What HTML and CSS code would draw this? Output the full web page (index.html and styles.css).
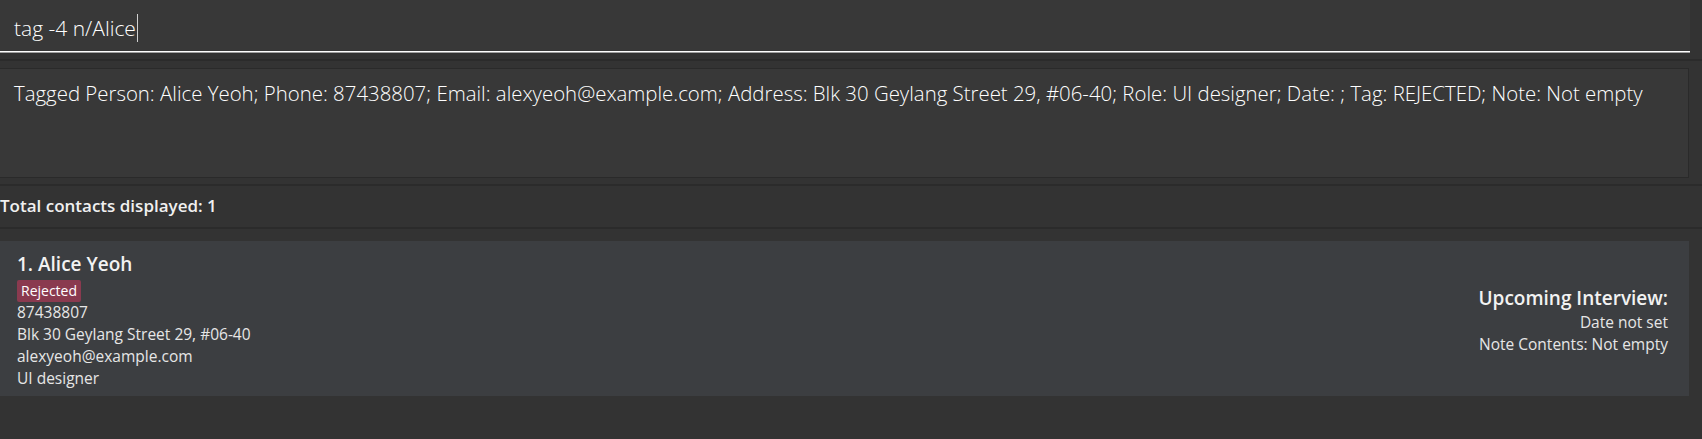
FILE: index.html
```html
<!DOCTYPE html>
<html>
<head>
<meta charset="utf-8">
<link rel="stylesheet" href="styles.css">
</head>
<body>
<div class="app">
  <div class="command-bar">
    <div class="command-field"><span class="command-text">tag -4 n/Alice</span><span class="caret"></span></div>
  </div>
  <div class="divider"></div>
  <div class="result-pane">
    <div class="result-box">Tagged Person: Alice Yeoh; Phone: 87438807; Email: alexyeoh@example.com; Address: Blk 30 Geylang Street 29, #06-40; Role: UI designer; Date: ; Tag: REJECTED; Note: Not empty</div>
  </div>
  <div class="divider"></div>
  <div class="status">Total contacts displayed: 1</div>
  <div class="divider"></div>
  <div class="list">
    <div class="card">
      <div class="card-left">
        <div class="name">1. Alice Yeoh</div>
        <div class="tags"><span class="tag">Rejected</span></div>
        <div class="field">87438807</div>
        <div class="field">Blk 30 Geylang Street 29, #06-40</div>
        <div class="field">alexyeoh@example.com</div>
        <div class="field">UI designer</div>
      </div>
      <div class="card-right">
        <div class="upcoming">Upcoming Interview:</div>
        <div class="field">Date not set</div>
        <div class="field">Note Contents: Not empty</div>
      </div>
    </div>
  </div>
</div>
</body>
</html>
```
FILE: styles.css
```css
html, body {
  margin: 0;
  padding: 0;
  background: #333333;
  width: 1702px;
  height: 439px;
  overflow: hidden;
}
.app {
  font-family: "Open Sans", "Noto Sans", sans-serif;
  color: #ffffff;
}
.command-bar {
  height: 59px;
  background: #333333;
}
.command-field {
  width: 1676px;
  height: 47px;
  padding: 4px 0 0 14px;
  background: #383838;
  border-bottom: 1px solid #ffffff;
  box-shadow: 0 1px 0 #a0a0a0;
  display: flex;
  align-items: center;
  font-size: 21px;
  font-weight: 300;
}
.command-text {
  letter-spacing: 0;
}
.caret {
  display: inline-block;
  width: 1px;
  height: 28px;
  background: #d0d0d0;
  margin-left: 1px;
}
.divider {
  height: 2px;
  background: #2b2b2b;
}
.result-pane {
  padding: 7px 0 6px 0;
}
.result-box {
  width: 1674px;
  height: 98px;
  margin-left: -1px;
  padding: 10px 0 0 14px;
  background: #383838;
  border: 1px solid #2a2a2a;
  font-size: 20.4px;
  line-height: 29px;
  font-weight: 300;
  white-space: nowrap;
}
.status {
  height: 41px;
  padding-bottom: 2px;
  box-sizing: border-box;
  display: flex;
  align-items: center;
  font-size: 17px;
  font-weight: 600;
  color: #f0f0f0;
}
.list {
  padding-top: 12px;
}
.card {
  width: 1651px;
  height: 155px;
  background: #3c3e41;
  padding: 0 21px 0 17px;
  display: flex;
  justify-content: space-between;
}
.card-left {
  padding-top: 10px;
  display: flex;
  flex-direction: column;
}
.name {
  font-size: 19px;
  font-weight: 600;
  color: #f2f2f2;
  line-height: 26px;
}
.tags {
  display: flex;
  margin-top: 3px;
  margin-bottom: -1px;
}
.tag {
  background: #8a3a4f;
  color: #ffffff;
  font-size: 14px;
  line-height: 22px;
  padding: 0 4px;
  border-radius: 2px;
}
.field {
  font-size: 15.5px;
  line-height: 22px;
  color: #e6e6e6;
}
.card-right {
  padding-top: 44px;
  display: flex;
  flex-direction: column;
  align-items: flex-end;
}
.upcoming {
  font-size: 19px;
  font-weight: 600;
  color: #f2f2f2;
  line-height: 26px;
}
```
